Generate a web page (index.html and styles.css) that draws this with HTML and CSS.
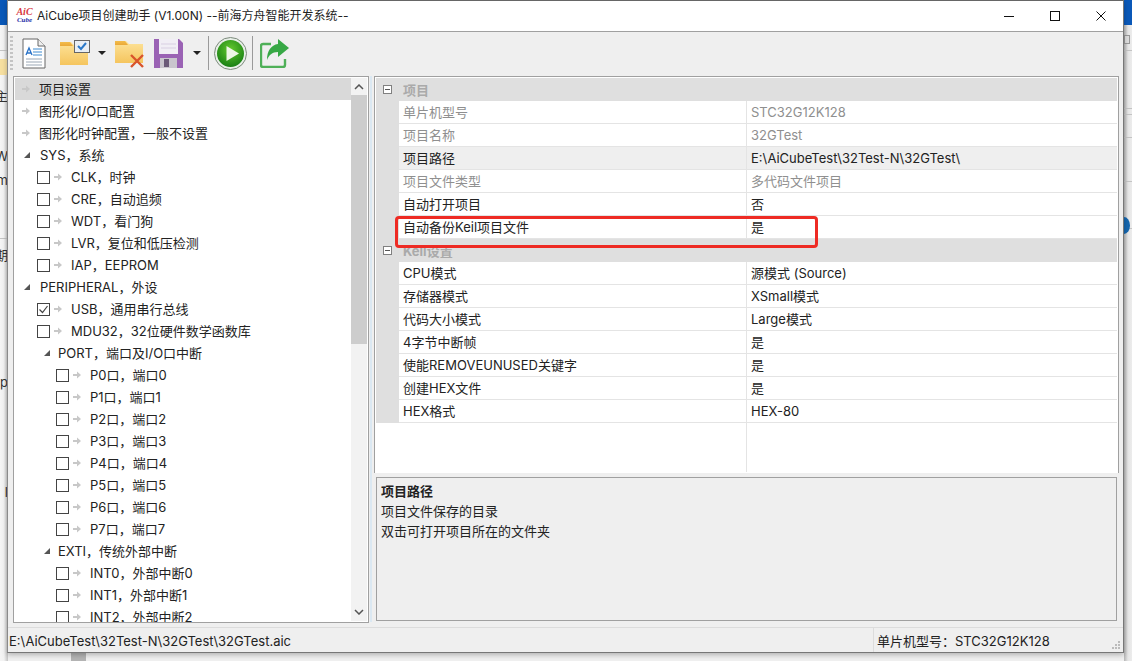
FILE: index.html
```html
<!DOCTYPE html>
<html lang="zh">
<head>
<meta charset="utf-8">
<title>AiCube项目创建助手</title>
<link rel="stylesheet" href="styles.css">
</head>
<body>
<svg width="0" height="0" class="defs"><defs>
<symbol id="arr" viewBox="0 0 10 10"><path d="M1 4h4V1.500L9 5 5 8.500V6H1z" fill="#c8c8c8"/></symbol>
<symbol id="tri" viewBox="0 0 8 8"><path d="M7 1v6H1z" fill="#555"/></symbol>
<symbol id="chk" viewBox="0 0 13 13"><path d="M2.500 6.500l3 3 5-6.500" fill="none" stroke="#444" stroke-width="1.200"/></symbol>
<linearGradient id="fold" x1="0" y1="0" x2="0" y2="1"><stop offset="0" stop-color="#fde39a"/><stop offset="1" stop-color="#f5c55e"/></linearGradient>
<linearGradient id="tab" x1="0" y1="0" x2="0" y2="1"><stop offset="0" stop-color="#f3bd4c"/><stop offset="1" stop-color="#eaa838"/></linearGradient>
<radialGradient id="g" cx=".5" cy=".35" r=".7"><stop offset="0" stop-color="#63c92e"/><stop offset="1" stop-color="#137a12"/></radialGradient>
</defs></svg>

<div class="desk desk-left">
  <span class="d-blue"></span><span class="d-yellow"></span><span class="d-line l50"></span><span class="d-line l238"></span>
  <span class="d-t t96">主</span><span class="d-t t156">W</span><span class="d-t t180">m</span><span class="d-t t255">期</span><span class="d-t t382">p</span><span class="d-t t492">l</span>
</div>
<div class="desk desk-right">
  <span class="d-blue"></span><span class="d-box"></span><span class="d-line l50"></span><span class="d-line l108"></span><span class="d-line l114"></span><span class="d-line l137"></span><span class="d-line l181"></span><span class="d-line l228"></span><span class="d-dot"></span>
</div>
<div class="desk-bottom"></div>

<main class="window">
  <header class="titlebar">
    <span class="logo"><span class="logo-a">AiC</span><span class="logo-b">Cube</span></span>
    <span class="title">AiCube项目创建助手 (V1.00N) --前海方舟智能开发系统--</span>
    <span class="wincontrols">
      <svg width="12" height="12" viewBox="0 0 12 12"><path d="M1 6.500h10" stroke="#111"/></svg>
      <svg width="12" height="12" viewBox="0 0 12 12"><rect x="1.500" y="1.500" width="9" height="9" fill="none" stroke="#111"/></svg>
      <svg width="12" height="12" viewBox="0 0 12 12"><path d="M1.500 1.500l9 9M10.500 1.500l-9 9" stroke="#111"/></svg>
    </span>
  </header>
  <nav class="toolbar">
    <span class="grip"></span>
    <svg class="tool t-doc" width="24" height="31" viewBox="0 0 24 31"><path d="M1 1h15l7 7v22H1z" fill="#fff" stroke="#666"/><path d="M16 1v7h7" fill="#eee" stroke="#666"/><path d="M4 17l3-7 3 7M5 15h4" fill="none" stroke="#2a73c8" stroke-width="1.300"/><path d="M11 11h9M11 14h9M11 17h9" stroke="#3c8ad0"/><path d="M4 21h16M4 24h16M4 27h16" stroke="#9aa7b5"/></svg>
    <svg class="tool t-open" width="30" height="26" viewBox="0 0 30 26"><path d="M0 2h11l3 3h14v20H0z" fill="url(#fold)"/><path d="M0 2h10l3 4H0z" fill="url(#tab)"/><rect x="14.500" y=".5" width="15" height="12" fill="#e9eef3" stroke="#666"/><path d="M18 6l3 3 5-6" fill="none" stroke="#2a78c8" stroke-width="2"/></svg>
    <svg class="drop d1" width="8" height="4" viewBox="0 0 8 4"><path d="M0 0h8L4 4z" fill="#222"/></svg>
    <svg class="tool t-del" width="29" height="27" viewBox="0 0 29 27"><path d="M0 0h11l3 3h14v19H0z" fill="url(#fold)"/><path d="M0 0h10l3 4H0z" fill="url(#tab)"/><path d="M16 14l12 12M28 14L16 26" stroke="#d9542b" stroke-width="2.400"/></svg>
    <svg class="tool t-save" width="29" height="29" viewBox="0 0 29 29"><path d="M0 0h25l4 4v25H0z" fill="#9a62b4"/><rect x="5" y="0" width="19" height="15" fill="#f1eef5"/><path d="M7 5h15M7 9h15" stroke="#d8cfe2"/><rect x="6" y="19" width="17" height="10" fill="#c9c5cd"/><rect x="10" y="20" width="5" height="8" fill="#6b5a78"/></svg>
    <svg class="drop d2" width="8" height="4" viewBox="0 0 8 4"><path d="M0 0h8L4 4z" fill="#222"/></svg>
    <span class="sep s1"></span>
    <svg class="tool t-play" width="33" height="33" viewBox="0 0 33 33"><circle cx="16.500" cy="16.500" r="16" fill="#e8efe8" stroke="#7c8a7c"/><circle cx="16.500" cy="16.500" r="13.500" fill="url(#g)"/><path d="M12.500 9L25 16.500 12.500 24z" fill="#eef6e6"/></svg>
    <span class="sep s2"></span>
    <svg class="tool t-share" width="30" height="30" viewBox="0 0 30 30"><path d="M11 6H3a2 2 0 0 0-2 2v19a2 2 0 0 0 2 2h20a2 2 0 0 0 2-2v-6" fill="none" stroke="#4fb058" stroke-width="2.400"/><path d="M18 1l11 9-11 9v-5c-6 0-9 3-11 8 0-9 4-15 11-16z" fill="#37a845"/></svg>
  </nav>
  <div class="panes">
    <section class="tree">
      <ul class="rows">
        <li class="row sel"><svg class="ar"><use href="#arr"/></svg><span>项目设置</span></li>
        <li class="row"><svg class="ar"><use href="#arr"/></svg><span>图形化I/O口配置</span></li>
        <li class="row"><svg class="ar"><use href="#arr"/></svg><span>图形化时钟配置，一般不设置</span></li>
        <li class="row"><svg class="ar tr"><use href="#tri"/></svg><span>SYS，系统</span></li>
        <li class="row l1"><i class="cb"></i><svg class="ar"><use href="#arr"/></svg><span>CLK，时钟</span></li>
        <li class="row l1"><i class="cb"></i><svg class="ar"><use href="#arr"/></svg><span>CRE，自动追频</span></li>
        <li class="row l1"><i class="cb"></i><svg class="ar"><use href="#arr"/></svg><span>WDT，看门狗</span></li>
        <li class="row l1"><i class="cb"></i><svg class="ar"><use href="#arr"/></svg><span>LVR，复位和低压检测</span></li>
        <li class="row l1"><i class="cb"></i><svg class="ar"><use href="#arr"/></svg><span>IAP，EEPROM</span></li>
        <li class="row"><svg class="ar tr"><use href="#tri"/></svg><span>PERIPHERAL，外设</span></li>
        <li class="row l1"><i class="cb"><svg width="13" height="13"><use href="#chk"/></svg></i><svg class="ar"><use href="#arr"/></svg><span>USB，通用串行总线</span></li>
        <li class="row l1"><i class="cb"></i><svg class="ar"><use href="#arr"/></svg><span>MDU32，32位硬件数学函数库</span></li>
        <li class="row g2"><svg class="ar tr"><use href="#tri"/></svg><span>PORT，端口及I/O口中断</span></li>
        <li class="row l2"><i class="cb"></i><svg class="ar"><use href="#arr"/></svg><span>P0口，端口0</span></li>
        <li class="row l2"><i class="cb"></i><svg class="ar"><use href="#arr"/></svg><span>P1口，端口1</span></li>
        <li class="row l2"><i class="cb"></i><svg class="ar"><use href="#arr"/></svg><span>P2口，端口2</span></li>
        <li class="row l2"><i class="cb"></i><svg class="ar"><use href="#arr"/></svg><span>P3口，端口3</span></li>
        <li class="row l2"><i class="cb"></i><svg class="ar"><use href="#arr"/></svg><span>P4口，端口4</span></li>
        <li class="row l2"><i class="cb"></i><svg class="ar"><use href="#arr"/></svg><span>P5口，端口5</span></li>
        <li class="row l2"><i class="cb"></i><svg class="ar"><use href="#arr"/></svg><span>P6口，端口6</span></li>
        <li class="row l2"><i class="cb"></i><svg class="ar"><use href="#arr"/></svg><span>P7口，端口7</span></li>
        <li class="row g2"><svg class="ar tr"><use href="#tri"/></svg><span>EXTI，传统外部中断</span></li>
        <li class="row l2"><i class="cb"></i><svg class="ar"><use href="#arr"/></svg><span>INT0，外部中断0</span></li>
        <li class="row l2"><i class="cb"></i><svg class="ar"><use href="#arr"/></svg><span>INT1，外部中断1</span></li>
        <li class="row l2"><i class="cb"></i><svg class="ar"><use href="#arr"/></svg><span>INT2，外部中断2</span></li>
      </ul>
      <div class="scrollbar">
        <svg width="10" height="6" viewBox="0 0 10 6"><path d="M1 5l4-4 4 4" fill="none" stroke="#555" stroke-width="1.500"/></svg>
        <div class="track"><div class="thumb"></div></div>
        <svg width="10" height="6" viewBox="0 0 10 6"><path d="M1 1l4 4 4-4" fill="none" stroke="#555" stroke-width="1.500"/></svg>
      </div>
    </section>
    <div class="splitter"></div>
    <section class="right">
      <div class="grid">
        <div class="group"><i class="minus"></i><span>项目</span></div>
        <div class="prop off"><span class="k">单片机型号</span><span class="v">STC32G12K128</span></div>
        <div class="prop off"><span class="k">项目名称</span><span class="v">32GTest</span></div>
        <div class="prop sel"><span class="k">项目路径</span><span class="v">E:\AiCubeTest\32Test-N\32GTest\</span></div>
        <div class="prop off"><span class="k">项目文件类型</span><span class="v">多代码文件项目</span></div>
        <div class="prop"><span class="k">自动打开项目</span><span class="v">否</span></div>
        <div class="prop"><span class="k">自动备份Keil项目文件</span><span class="v">是</span></div>
        <div class="group"><i class="minus"></i><span>Keil设置</span></div>
        <div class="prop"><span class="k">CPU模式</span><span class="v">源模式 (Source)</span></div>
        <div class="prop"><span class="k">存储器模式</span><span class="v">XSmall模式</span></div>
        <div class="prop"><span class="k">代码大小模式</span><span class="v">Large模式</span></div>
        <div class="prop"><span class="k">4字节中断帧</span><span class="v">是</span></div>
        <div class="prop"><span class="k">使能REMOVEUNUSED关键字</span><span class="v">是</span></div>
        <div class="prop"><span class="k">创建HEX文件</span><span class="v">是</span></div>
        <div class="prop"><span class="k">HEX格式</span><span class="v">HEX-80</span></div>
        <div class="filler"><span class="k"></span><span class="v"></span></div>
        <div class="redbox"></div>
      </div>
      <div class="help">
        <strong>项目路径</strong>
        <p>项目文件保存的目录</p>
        <p>双击可打开项目所在的文件夹</p>
      </div>
    </section>
  </div>
  <footer class="status">
    <span class="path">E:\AiCubeTest\32Test-N\32GTest\32GTest.aic</span>
    <span class="mcu">单片机型号：STC32G12K128</span>
    <svg class="gripper" width="10" height="10" viewBox="0 0 10 10"><path d="M7 1h2v2H7zM4 4h2v2H4zM7 4h2v2H7zM1 7h2v2H1zM4 7h2v2H4zM7 7h2v2H7z" fill="#bbb"/></svg>
  </footer>
</main>
</body>
</html>
```
FILE: styles.css
```css
* { box-sizing: border-box; }
html, body { margin: 0; height: 100%; }
body {
  width: 1132px; height: 661px; overflow: hidden; position: relative;
  background: #f0f0f0;
  font: 13px/22px Inter, "Noto Sans CJK SC", sans-serif;
  color: #222;
}
.defs { position: absolute; }

/* desktop windows peeking out behind the main window */
.desk { position: absolute; top: 0; width: 8px; height: 661px; overflow: hidden; }
.desk-left { left: 0; background: linear-gradient(90deg, #f5f5f5 0, #f2f2f2 4px, #c4c4c4 8px); }
.desk-right { left: 1124px; background: linear-gradient(90deg, #b5b5b5 0, #e6e6e6 4px, #ececec 8px); }
.desk-bottom { position: absolute; left: 71px; top: 653px; width: 15px; height: 8px; background: #b4b4b4; }
.d-blue { position: absolute; left: 0; top: 0; width: 8px; height: 25px; background: #0a58b8; }
.d-yellow { position: absolute; left: 0; top: 59px; width: 8px; height: 16px; background: #f6dfa0; }
.d-line { position: absolute; left: 0; width: 8px; height: 1px; background: #c4c4c4; }
.l50 { top: 50px; } .l108 { top: 108px; } .l114 { top: 114px; } .l137 { top: 137px; }
.l181 { top: 181px; } .l228 { top: 228px; } .l238 { top: 238px; }
.d-box { position: absolute; left: 0; top: 35px; width: 6px; height: 9px; border: 1px solid #999; background: #ddd; }
.d-dot { position: absolute; left: -6px; top: 217px; width: 12px; height: 17px; border-radius: 50%; background: #1566ae; }
.d-t { position: absolute; right: 0; font-size: 13px; line-height: 16px; color: #333; white-space: nowrap; }
.t96 { top: 88px; } .t156 { top: 148px; } .t180 { top: 172px; } .t255 { top: 247px; } .t382 { top: 374px; } .t492 { top: 484px; }

.window {
  position: absolute; left: 7px; top: 0; width: 1117px; height: 653px;
  background: #efefef; border: 1px solid #777; border-top: 0; border-left-color: #8a8a8a;
  display: flex; flex-direction: column;
  box-shadow: 0 2px 5px rgba(0,0,0,.25);
}
.titlebar {
  height: 32px; flex: none; background: #fff; border-bottom: 1px solid #a0a0a0;
  border-top: 1px solid #666;
  display: flex; align-items: center; padding-left: 8px;
}
.logo { width: 17px; height: 18px; display: flex; flex-direction: column; align-items: center; font: italic bold 9px/8px "Liberation Serif", serif; }
.logo-a { color: #d8383f; font-size: 10px; line-height: 10px; }
.logo-b { color: #2730a8; font-size: 7px; line-height: 7px; }
.title { margin-left: 4px; font-size: 12px; color: #222; }
.wincontrols { margin-left: auto; display: flex; gap: 34px; padding-right: 16px; }

.toolbar { height: 44px; flex: none; display: flex; align-items: center; padding: 0 0 2px 2px; }
.grip { width: 3px; height: 34px; margin-right: 9px; background: repeating-linear-gradient(#c4c4c4 0 2px, transparent 2px 4px); }
.tool, .drop, .sep { flex: none; }
.t-open { margin-left: 14px; }
.d1 { margin-left: 8px; }
.t-del { margin-left: 9px; margin-top: 3px; }
.t-save { margin-left: 10px; }
.d2 { margin-left: 10px; }
.sep { width: 1px; height: 34px; background: #9a9a9a; }
.s1 { margin-left: 7px; }
.t-play { margin-left: 5px; }
.s2 { margin-left: 5px; }
.t-share { margin-left: 7px; }

.panes { flex: 1; min-height: 0; display: flex; padding: 0 4px 5px 5px; }
.tree {
  width: 356px; flex: none; background: #fff; border: 1px solid #a0a0a0;
  display: flex; overflow: hidden; height: 547px;
}
.splitter { width: 5px; flex: none; background: linear-gradient(90deg, #efefef 0 1px, #dbe8f2 1px 3px, #efefef 3px); }
.rows { flex: 1; min-width: 0; list-style: none; margin: 0; padding: 1px 0 0 1px; overflow: hidden; }
.row { height: 22px; display: flex; align-items: center; padding-left: 6px; color: #222; white-space: nowrap; }
.row.sel { background: #d9d9d9; }
.row .ar { width: 10px; height: 10px; flex: none; margin-right: 8px; }
.row .ar.tr { width: 8px; height: 8px; margin: 0 9px 0 2px; }
.row.l1 { padding-left: 22px; }
.row.l2 { padding-left: 41px; }
.row.g2 { padding-left: 26px; }
.row.g2 .ar.tr { margin-right: 7px; }
.cb { width: 13px; height: 13px; border: 1px solid #444; background: #fff; flex: none; margin-right: 3px; display: block; }
.cb svg { display: block; margin: -1px; }
.scrollbar {
  width: 16px; flex: none; background: #f2f2f2; margin: 1px 1px 1px 0;
  display: flex; flex-direction: column; align-items: center;
}
.scrollbar > svg { flex: none; margin: 6px 0; }
.track { flex: 1; width: 100%; margin: -1px 0; }
.thumb { width: 100%; height: 249px; background: #cdcdcd; }

.right { flex: 1; min-width: 0; display: flex; flex-direction: column; height: 547px; position: relative; }
.grid {
  height: 397px; flex: none; background: #fff; border: 1px solid #a0a0a0; position: relative;
  padding: 1px 0 0 1px; overflow: hidden; border-bottom: 0;
}
.group {
  height: 23px; background: #dfdfdf; display: flex; align-items: center; color: #aaa; font-weight: 700; padding-left: 7px; margin-right: 1px;
}
.group span { margin-left: 11px; }
.minus { width: 9px; height: 9px; border: 1px solid #808080; background: #fff; position: relative; display: block; }
.minus::after { content: ""; position: absolute; left: 1px; top: 3px; width: 5px; height: 1px; background: #555; }
.prop, .filler {
  display: grid; grid-template-columns: 347px 1fr; height: 23px;
  border-left: 23px solid #dfdfdf; margin-right: 1px;
}
.k, .v { padding-left: 4px; border-bottom: 1px solid #e4e4e4; line-height: 22px; white-space: nowrap; color: #222; }
.v { border-left: 1px solid #e4e4e4; }
.off .k, .off .v { color: #8f8f8f; }
.prop.sel .k, .prop.sel .v { background: #efefef; }
.filler { height: 49px; border-left-color: #fff; }
.filler .k, .filler .v { border-bottom: 0; }
.redbox {
  position: absolute; left: 20px; top: 139px; width: 423px; height: 32px;
  border: 3px solid #ee2b24; border-radius: 4px;
}
.help {
  margin: 4px 2px 0 2px; height: 144px; border: 1px solid #a0a0a0; box-shadow: inset 0 0 0 1px #efefef;
  padding: 3px 4px; background: #efefef; line-height: 20px; color: #222;
}
.help strong { display: block; font-weight: 700; }
.help p { margin: 0; }

.status {
  height: 25px; flex: none; border-top: 1px solid #dcdcdc; display: flex; align-items: center; padding: 2px 0 0 1px; position: relative;
}
.mcu { position: absolute; left: 865px; top: 0; height: 24px; padding-left: 3px; border-left: 1px solid #dcdcdc; line-height: 27px; }
.gripper { position: absolute; right: 2px; bottom: 2px; }
```
